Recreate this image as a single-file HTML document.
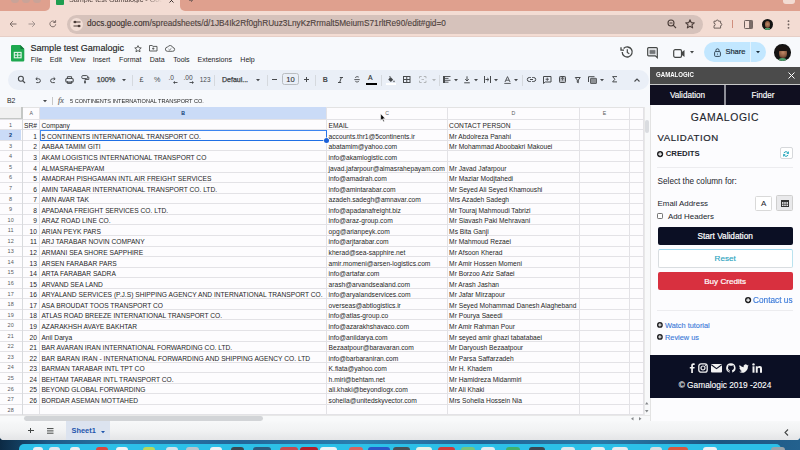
<!DOCTYPE html><html><head><meta charset="utf-8"><style>
*{margin:0;padding:0;box-sizing:border-box}
html,body{width:800px;height:450px;overflow:hidden;background:#1c3d5a;font-family:"Liberation Sans",sans-serif}
.a{position:absolute}
.t{position:absolute;white-space:nowrap;line-height:1}
svg{position:absolute;overflow:visible}
.g{font-size:6.66px;color:#262626}
</style></head><body><div class="a" style="left:0;top:430px;width:800px;height:20px;background:linear-gradient(90deg,#0c2a44 0%,#1d5a86 6%,#2a77a6 15%,#22679a 30%,#2a80b0 45%,#206596 60%,#2a7aa8 75%,#1c5682 90%,#23618e 100%)"></div><div class="a" style="left:19px;top:443.5px;width:762px;height:12px;border-radius:5px;background:#2cc0e8"></div><div class="a" style="left:33px;top:446.8px;width:10px;height:8px;border-radius:3px;background:#e9eef2"></div><div class="a" style="left:49px;top:446.8px;width:11px;height:8px;border-radius:3px;background:#dfe7ee"></div><div class="a" style="left:70px;top:446.8px;width:10px;height:8px;border-radius:3px;background:#eceff1"></div><div class="a" style="left:96px;top:446.8px;width:12px;height:8px;border-radius:3px;background:#d9463c"></div><div class="a" style="left:116px;top:446.8px;width:12px;height:8px;border-radius:3px;background:#f1f3f4"></div><div class="a" style="left:143px;top:446.8px;width:12px;height:8px;border-radius:3px;background:#b9d65a"></div><div class="a" style="left:166px;top:446.8px;width:12px;height:8px;border-radius:3px;background:#d4e2ea"></div><div class="a" style="left:186px;top:446.8px;width:13px;height:8px;border-radius:3px;background:#b8c4cc"></div><div class="a" style="left:210px;top:446.8px;width:12px;height:8px;border-radius:3px;background:#eef2f4"></div><div class="a" style="left:231px;top:446.8px;width:13px;height:8px;border-radius:3px;background:#3b4650"></div><div class="a" style="left:253px;top:446.8px;width:18px;height:8px;border-radius:3px;background:#2d5b7e"></div><div class="a" style="left:280px;top:446.8px;width:18px;height:8px;border-radius:3px;background:#c84b4f"></div><div class="a" style="left:300px;top:446.8px;width:18px;height:8px;border-radius:3px;background:#b51f2a"></div><div class="a" style="left:320px;top:446.8px;width:17px;height:8px;border-radius:3px;background:#eef3f6"></div><div class="a" style="left:349px;top:446.8px;width:14px;height:8px;border-radius:3px;background:#d9645f"></div><div class="a" style="left:368px;top:446.8px;width:22px;height:8px;border-radius:3px;background:#2a56c8"></div><div class="a" style="left:393px;top:446.8px;width:17px;height:8px;border-radius:3px;background:#4a4f55"></div><div class="a" style="left:416px;top:446.8px;width:16px;height:8px;border-radius:3px;background:#e6f1e6"></div><div class="a" style="left:438px;top:446.8px;width:17px;height:8px;border-radius:3px;background:#cf3c3c"></div><div class="a" style="left:461px;top:446.8px;width:14px;height:8px;border-radius:3px;background:#78c47a"></div><div class="a" style="left:481px;top:446.8px;width:14px;height:8px;border-radius:3px;background:#e3ecef"></div><div class="a" style="left:506px;top:446.8px;width:14px;height:8px;border-radius:3px;background:#41b06a"></div><div class="a" style="left:529px;top:446.8px;width:16px;height:8px;border-radius:3px;background:#3c4650"></div><div class="a" style="left:561px;top:446.8px;width:14px;height:8px;border-radius:3px;background:#dfe8ec"></div><div class="a" style="left:591px;top:446.8px;width:14px;height:8px;border-radius:3px;background:#e9eef0"></div><div class="a" style="left:612px;top:446.8px;width:16px;height:8px;border-radius:3px;background:#e6ecef"></div><div class="a" style="left:650px;top:446.8px;width:12px;height:8px;border-radius:3px;background:#d8dde0"></div><div class="a" style="left:668px;top:446.8px;width:20px;height:8px;border-radius:3px;background:#d9573f"></div><div class="a" style="left:703px;top:446.8px;width:14px;height:8px;border-radius:3px;background:#eef2f4"></div><div class="a" style="left:771px;top:446.8px;width:14px;height:8px;border-radius:3px;background:#9aa3aa"></div><div class="a" style="left:0;top:0;width:800px;height:439.6px;background:#f7f9fc;border-radius:0 0 4px 4px;overflow:hidden"><div class="a" style="left:0;top:0;width:800px;height:37px;background:#f3dcd3"></div><div class="a" style="left:0;top:0;width:50px;height:10.6px;background:#dfa08e;border-radius:0 0 5px 0"></div><div class="a" style="left:180px;top:0;width:620px;height:10.6px;background:#dfa08e;border-radius:0 0 0 5px"></div><div class="a" style="left:11.4px;top:-4px;width:7.2px;height:7.2px;border-radius:50%;background:#c9a398"></div><div class="a" style="left:22.4px;top:-4px;width:7.2px;height:7.2px;border-radius:50%;background:#c9a398"></div><div class="a" style="left:33.4px;top:-4px;width:7.2px;height:7.2px;border-radius:50%;background:#c9a398"></div><div class="a" style="left:56px;top:-3px;width:8px;height:7.5px;background:#1e9e50;border-radius:1px"></div><div class="t" style="left:69px;top:-4.4px;font-size:7.2px;color:#4e403c;-webkit-mask-image:linear-gradient(90deg,#000 82%,transparent 100%);width:93px;overflow:hidden">Sample test Gamalogic - Google Sheets</div><svg style="left:168.5px;top:-2.5px" width="5" height="5" viewBox="0 0 5 5"><path d="M.5.5l4 4M4.5.5l-4 4" stroke="#3b3230" stroke-width="1"/></svg><div class="a" style="left:190.5px;top:-2px;width:1px;height:4px;background:#8a6a62"></div><div class="a" style="left:189px;top:-.5px;width:4px;height:1px;background:#8a6a62"></div><div class="a" style="left:783px;top:-4px;width:12px;height:8px;border-radius:3px;background:#f3dcd3"></div><div class="a" style="left:0;top:36px;width:800px;height:1px;background:#e6cfc7"></div><svg style="left:8.5px;top:19.5px" width="8" height="8" viewBox="0 0 8 8"><path d="M7.5 4H1M3.8 1.2L1 4l2.8 2.8" fill="none" stroke="#7d6d69" stroke-width="1"/></svg><svg style="left:28.3px;top:19.5px" width="8" height="8" viewBox="0 0 8 8"><path d="M.5 4H7M4.2 1.2L7 4 4.2 6.8" fill="none" stroke="#a39490" stroke-width="1"/></svg><svg style="left:48.5px;top:19.5px" width="8" height="8" viewBox="0 0 8 8"><path d="M6.7 4.3A2.9 2.9 0 1 1 5.9 1.9" fill="none" stroke="#7d6d69" stroke-width="1"/><path d="M4.3 1.3h2.3V-1" fill="none" stroke="#7d6d69" stroke-width="1" transform="translate(0,1.2)"/></svg><div class="a" style="left:67px;top:14.5px;width:636px;height:19px;border-radius:10px;background:#d6c2bb"></div><div class="a" style="left:70px;top:17.5px;width:13px;height:13px;border-radius:50%;background:#f2ded6"></div><svg style="left:71.5px;top:19px" width="10" height="10" viewBox="0 0 10 10"><path d="M1.5 3h7M1.5 7h7" stroke="#4a3c38" stroke-width="1.1"/><circle cx="3" cy="3" r="1.3" fill="#4a3c38"/><circle cx="7" cy="7" r="1.3" fill="#4a3c38"/></svg><div class="t" style="left:87px;top:19.9px;font-size:8.25px;color:#3a302d;-webkit-text-stroke:.12px #3a302d">docs.google.com<span style="color:#544743">/spreadsheets/d/1JB4Ik2Rf0ghRUuz3LnyKzRrmalt5MeiumS71rltRe90/edit#gid=0</span></div><svg style="left:667px;top:19px" width="10" height="10" viewBox="0 0 10 10"><circle cx="4" cy="4" r="3" fill="none" stroke="#4a3c38" stroke-width="1.1"/><path d="M6.2 6.2L9 9M2.5 4h3" stroke="#4a3c38" stroke-width="1.1"/></svg><svg style="left:685px;top:19px" width="10" height="10" viewBox="0 0 10 10"><path d="M5 .8l1.25 2.8 3 .3-2.3 2 .7 3L5 7.3 2.35 8.9l.7-3-2.3-2 3-.3z" fill="none" stroke="#4a3c38" stroke-width="1.1" stroke-linejoin="round"/></svg><svg style="left:713px;top:19px" width="10" height="10" viewBox="0 0 10 10"><path d="M1 2.2h2.1a1.2 1.2 0 0 1 2.4 0h2.1v2.1a1.2 1.2 0 0 1 0 2.4v2.4H1V6.7a1.2 1.2 0 0 0 0-2.4z" fill="none" stroke="#6e605c" stroke-width="1"/></svg><div class="a" style="left:732.2px;top:19.5px;width:.9px;height:8.5px;background:#d08f7e"></div><svg style="left:743.5px;top:19.5px" width="9" height="9" viewBox="0 0 9 9"><rect x=".5" y=".5" width="8" height="8" rx=".8" fill="none" stroke="#6e605c" stroke-width="1"/><rect x="5" y=".5" width="3.5" height="8" fill="#7a6c68"/></svg><div class="a" style="left:762px;top:18.5px;width:11px;height:11px;border-radius:50%;background:#121212;overflow:hidden"><div class="a" style="left:3.2px;top:2.8px;width:5px;height:6.5px;border-radius:45%;background:radial-gradient(circle at 50% 45%,#c08a68 0,#8a5a40 60%,#3a2418 100%)"></div><div class="a" style="left:3px;top:9px;width:5px;height:3px;background:#4e9a6a"></div></div><svg style="left:786.5px;top:19.5px" width="3" height="9" viewBox="0 0 3 9"><circle cx="1.5" cy="1.2" r=".9" fill="#6e605c"/><circle cx="1.5" cy="4.5" r=".9" fill="#6e605c"/><circle cx="1.5" cy="7.8" r=".9" fill="#6e605c"/></svg><svg style="left:10.5px;top:44.9px" width="13.3" height="16.5" viewBox="0 0 13.3 16.5"><path d="M1.2 0H9.3L13.3 4V15.3A1.2 1.2 0 0 1 12.1 16.5H1.2A1.2 1.2 0 0 1 0 15.3V1.2A1.2 1.2 0 0 1 1.2 0z" fill="#1ea84f"/><path d="M9.3 0L13.3 4H10.3a1 1 0 0 1-1-1z" fill="#137a3a"/><rect x="3.3" y="7.4" width="6.8" height="5.4" fill="none" stroke="#e8f5ec" stroke-width="1.1"/><path d="M3.3 10.1h6.8M6.7 7.4v5.4" stroke="#e8f5ec" stroke-width="1"/></svg><div class="t" style="left:30.5px;top:43.8px;font-size:9.05px;color:#1f1f1f;-webkit-text-stroke:.15px #1f1f1f">Sample test Gamalogic</div><svg style="left:133.5px;top:44.8px" width="8" height="7.5" viewBox="0 0 8 7.5"><path d="M4 .6l.95 2.1 2.3.25-1.7 1.55.5 2.3L4 5.6 1.95 6.8l.5-2.3L.75 2.95l2.3-.25z" fill="none" stroke="#444746" stroke-width=".85" stroke-linejoin="round"/></svg><svg style="left:149.3px;top:45px" width="8.5" height="6.5" viewBox="0 0 8.5 6.5"><path d="M.5.5h2.6l.9.9h4v4.6H.5z" fill="none" stroke="#444746" stroke-width=".85"/><path d="M4.25 2.4v2.4M3.05 3.6h2.4" stroke="#444746" stroke-width=".75"/></svg><svg style="left:164.8px;top:45px" width="10" height="6.8" viewBox="0 0 10 6.8"><path d="M2.4 6.3h5.2a1.9 1.9 0 0 0 .2-3.8A2.8 2.8 0 0 0 2.6 2.1 2.1 2.1 0 0 0 2.4 6.3z" fill="none" stroke="#444746" stroke-width=".85"/><path d="M3.6 4.1l1 .9 1.8-1.7" fill="none" stroke="#444746" stroke-width=".7"/></svg><div class="t" style="left:30.8px;top:56.2px;font-size:7.05px;color:#1f1f1f">File</div><div class="t" style="left:49.8px;top:56.2px;font-size:7.05px;color:#1f1f1f">Edit</div><div class="t" style="left:70.1px;top:56.2px;font-size:7.05px;color:#1f1f1f">View</div><div class="t" style="left:92.7px;top:56.2px;font-size:7.05px;color:#1f1f1f">Insert</div><div class="t" style="left:119.1px;top:56.2px;font-size:7.05px;color:#1f1f1f">Format</div><div class="t" style="left:149.7px;top:56.2px;font-size:7.05px;color:#1f1f1f">Data</div><div class="t" style="left:173.2px;top:56.2px;font-size:7.05px;color:#1f1f1f">Tools</div><div class="t" style="left:197.5px;top:56.2px;font-size:7.05px;color:#1f1f1f">Extensions</div><div class="t" style="left:240.3px;top:56.2px;font-size:7.05px;color:#1f1f1f">Help</div><svg style="left:620px;top:45px" width="14" height="14" viewBox="0 0 14 14"><path d="M2.2 7A5 5 0 1 0 3.6 3.5" fill="none" stroke="#444746" stroke-width="1.3"/><path d="M1 2.2v3h3" fill="none" stroke="#444746" stroke-width="1.3"/><path d="M7.3 4.3V7.4l2 1.3" fill="none" stroke="#444746" stroke-width="1.2"/></svg><svg style="left:646.5px;top:46.8px" width="11" height="11" viewBox="0 0 11 11"><path d="M1.6.7h7.8a.9.9 0 0 1 .9.9v9l-2-1.8H1.6a.9.9 0 0 1-.9-.9V1.6a.9.9 0 0 1 .9-.9z" fill="none" stroke="#444746" stroke-width="1.2"/><rect x="2.6" y="2.7" width="5.8" height="4.6" fill="#8e9194"/><path d="M2.6 4.2h5.8M2.6 5.8h5.8" stroke="#444746" stroke-width=".5"/></svg><svg style="left:672.5px;top:48.5px" width="12" height="9" viewBox="0 0 12 9"><path d="M2.2.7h5a1.3 1.3 0 0 1 1.3 1.3v5a1.3 1.3 0 0 1-1.3 1.3h-5A1.5 1.5 0 0 1 .7 6.8V2.2A1.5 1.5 0 0 1 2.2.7z" fill="none" stroke="#444746" stroke-width="1.2"/><path d="M8.5 3.3l3-2.3v7l-3-2.3z" fill="#444746"/></svg><svg style="left:689.5px;top:50.8px" width="4" height="3" viewBox="0 0 4 3"><path d="M0 0h4L2 2.4z" fill="#444746"/></svg><div class="a" style="left:704px;top:42px;width:62px;height:20px;border-radius:10px;background:#c2e7ff"></div><div class="a" style="left:750px;top:42px;width:1px;height:20px;background:#f9fbfd;opacity:.6"></div><svg style="left:713.5px;top:47.5px" width="7" height="9" viewBox="0 0 7 9"><rect x=".6" y="3.6" width="5.8" height="4.8" rx=".9" fill="none" stroke="#273a4a" stroke-width=".9"/><path d="M1.9 3.6V2.4a1.6 1.6 0 0 1 3.2 0v1.2" fill="none" stroke="#273a4a" stroke-width=".9"/><circle cx="3.5" cy="6" r=".6" fill="#273a4a"/></svg><div class="t" style="left:725.4px;top:48.2px;font-size:7.5px;color:#1d2e3b;-webkit-text-stroke:.2px #1d2e3b">Share</div><svg style="left:756px;top:51px" width="4" height="2.5" viewBox="0 0 4 2.5"><path d="M0 0h4L2 2.3z" fill="#1d2e3b"/></svg><div class="a" style="left:774px;top:44.3px;width:16.5px;height:16.5px;border-radius:50%;background:#141414;overflow:hidden"><div class="a" style="left:4.5px;top:4px;width:8px;height:10px;border-radius:45%;background:radial-gradient(circle at 50% 45%,#c08a68 0,#8a5a40 55%,#3a2418 100%)"></div><div class="a" style="left:2px;top:2px;width:12px;height:5px;border-radius:50% 50% 20% 20%;background:#1a1412"></div><div class="a" style="left:3.5px;top:13.5px;width:9px;height:4px;border-radius:4px 4px 0 0;background:#4e9a6a"></div></div><div class="a" style="left:8px;top:70px;width:641px;height:19.6px;border-radius:10px;background:#eaeff7"></div><svg style="left:17px;top:75px" width="9" height="9" viewBox="0 0 9 9"><circle cx="3.9" cy="3.8" r="2.5" fill="none" stroke="#474a4d" stroke-width="1.1"/><path d="M5.6 5.6L8 8" stroke="#474a4d" stroke-width="1.2"/></svg><svg style="left:35px;top:76.5px" width="6" height="6" viewBox="0 0 6 6"><path d="M1.2 1.8h2.3a1.9 1.9 0 0 1 0 3.8H1.2" fill="none" stroke="#474a4d" stroke-width="1"/><path d="M2.3 .4L.8 1.8l1.5 1.4" fill="none" stroke="#474a4d" stroke-width="1"/></svg><svg style="left:50px;top:76.5px" width="6" height="6" viewBox="0 0 6 6"><path d="M4.8 1.8H2.5a1.9 1.9 0 0 0 0 3.8h2.3" fill="none" stroke="#474a4d" stroke-width="1"/><path d="M3.7 .4l1.5 1.4-1.5 1.4" fill="none" stroke="#474a4d" stroke-width="1"/></svg><svg style="left:64.5px;top:75.5px" width="9" height="8" viewBox="0 0 9 8"><rect x=".8" y="2.5" width="7.4" height="3.6" rx="1.2" fill="none" stroke="#474a4d" stroke-width="1.1"/><path d="M2.4 2.5V.7h4.2v1.8M2.4 5.2v2.2h4.2V5.2" fill="none" stroke="#474a4d" stroke-width="1"/></svg><svg style="left:80.5px;top:75px" width="8.5" height="9" viewBox="0 0 8.5 9"><rect x=".8" y=".6" width="5.8" height="3" rx="1" fill="none" stroke="#474a4d" stroke-width="1"/><path d="M6.6 2.1h1.2v2.4H4v1.4" fill="none" stroke="#474a4d" stroke-width=".9"/><rect x="3.1" y="5.7" width="1.8" height="2.9" rx=".8" fill="#474a4d"/></svg><div class="t" style="left:96.7px;top:76.2px;font-size:7.2px;color:#3c3f42;-webkit-text-stroke:.25px #3c3f42">100%</div><svg style="left:122px;top:79.2px" width="4" height="2.5" viewBox="0 0 4 2.5"><path d="M0 0h4L2 2.3z" fill="#474a4d"/></svg><div class="a" style="left:132px;top:74.5px;width:.8px;height:11px;background:#d5d9de"></div><div class="t" style="left:139.6px;top:76px;font-size:7.2px;color:#474a4d">£</div><div class="t" style="left:154px;top:76px;font-size:7.2px;color:#474a4d">%</div><div class="t" style="left:168.5px;top:74.8px;font-size:6.6px;color:#474a4d">.0</div><svg style="left:172.5px;top:81px" width="5" height="3" viewBox="0 0 5 3"><path d="M4.5 1.5H1.5" stroke="#474a4d" stroke-width=".9"/><path d="M2 0L0 1.5 2 3z" fill="#474a4d"/></svg><div class="t" style="left:183.5px;top:74.8px;font-size:6.6px;color:#474a4d">.00</div><svg style="left:188.5px;top:81px" width="5" height="3" viewBox="0 0 5 3"><path d="M.5 1.5H3.5" stroke="#474a4d" stroke-width=".9"/><path d="M3 0L5 1.5 3 3z" fill="#474a4d"/></svg><div class="t" style="left:199.8px;top:76.5px;font-size:6.4px;color:#474a4d">123</div><div class="a" style="left:214.3px;top:74.5px;width:.8px;height:11px;background:#d5d9de"></div><div class="t" style="left:222px;top:76.3px;font-size:7px;color:#3c3f42;-webkit-text-stroke:.25px #3c3f42">Defaul...</div><svg style="left:255.5px;top:79.2px" width="4" height="2.5" viewBox="0 0 4 2.5"><path d="M0 0h4L2 2.3z" fill="#474a4d"/></svg><div class="a" style="left:266.5px;top:74.5px;width:.8px;height:11px;background:#d5d9de"></div><div class="a" style="left:272px;top:79.4px;width:4.8px;height:1px;background:#474a4d"></div><div class="a" style="left:282px;top:73.3px;width:17px;height:12px;border:.8px solid #b9bdc1;border-radius:2.5px"></div><div class="t" style="left:282px;width:17px;text-align:center;top:76.2px;font-size:7.6px;color:#2c2f32;-webkit-text-stroke:.1px #2c2f32">10</div><div class="a" style="left:304px;top:79.4px;width:4.8px;height:1px;background:#474a4d"></div><div class="a" style="left:305.9px;top:77px;width:1px;height:5px;background:#474a4d"></div><div class="a" style="left:314.5px;top:74.5px;width:.8px;height:11px;background:#d5d9de"></div><div class="t" style="left:322.8px;top:76.3px;font-size:7px;font-weight:bold;color:#474a4d">B</div><svg style="left:337.5px;top:76.5px" width="5" height="6" viewBox="0 0 5 6"><path d="M1.8 .5h3.2M0 5.5h3.2M3.4 .5L1.6 5.5" fill="none" stroke="#474a4d" stroke-width="1"/></svg><svg style="left:353.5px;top:76px" width="6" height="7" viewBox="0 0 6 7"><path d="M.3 3.6h5.4" stroke="#474a4d" stroke-width=".9"/><path d="M4.8 1.2C4.3.5 1.4.3 1.4 1.8M1.3 5.2c.4 1.1 3.5 1.1 3.5-.3" fill="none" stroke="#474a4d" stroke-width=".9"/></svg><div class="t" style="left:368px;top:75.2px;font-size:6.8px;color:#2c2f32;-webkit-text-stroke:.15px #2c2f32">A</div><div class="a" style="left:365.5px;top:82.8px;width:11.5px;height:1.8px;background:#000"></div><div class="a" style="left:381px;top:74.5px;width:.8px;height:11px;background:#d5d9de"></div><svg style="left:386.5px;top:75.5px" width="8" height="7" viewBox="0 0 8 7"><path d="M1.2 3.5L3.6 1.1l2.6 2.6-2.4 2.4z" fill="#474a4d"/><path d="M2 1l1.5-.5" stroke="#474a4d" stroke-width=".8"/><path d="M7 4.2c.4.6.7 1 .7 1.4a.7.7 0 0 1-1.4 0c0-.4.3-.8.7-1.4z" fill="#474a4d"/></svg><div class="a" style="left:386px;top:83px;width:10px;height:1.5px;background:#fff"></div><svg style="left:403.3px;top:76px" width="7.5" height="7" viewBox="0 0 7.5 7"><rect x=".5" y=".5" width="6.5" height="6" fill="none" stroke="#474a4d" stroke-width="1"/><path d="M3.75 .5v6M.5 3.5h6.5" stroke="#474a4d" stroke-width="1"/></svg><svg style="left:419px;top:76px" width="7.5" height="7" viewBox="0 0 7.5 7"><path d="M.5 2.3V.5h2.2M4.8.5H7v1.8M7 4.7v1.8H4.8M2.7 6.5H.5V4.7" fill="none" stroke="#b3b6b9" stroke-width="1"/><path d="M2.5 3.5h2.5" stroke="#b3b6b9" stroke-width=".9"/></svg><svg style="left:432px;top:79.2px" width="4" height="2.5" viewBox="0 0 4 2.5"><path d="M0 0h4L2 2.3z" fill="#b3b6b9"/></svg><div class="a" style="left:438.5px;top:74.5px;width:.8px;height:11px;background:#d5d9de"></div><svg style="left:443px;top:76px" width="8" height="7" viewBox="0 0 8 7"><path d="M.5 .5h7M.5 2.4h5M.5 4.3h7M.5 6.2h5" stroke="#474a4d" stroke-width=".9"/><rect x="0" y="0" width="2" height="7" fill="#474a4d"/></svg><svg style="left:454.2px;top:79.2px" width="4" height="2.5" viewBox="0 0 4 2.5"><path d="M0 0h4L2 2.3z" fill="#474a4d"/></svg><svg style="left:463.5px;top:75.8px" width="6" height="7.5" viewBox="0 0 6 7.5"><path d="M3 .3v4.5M1.2 3.2L3 5l1.8-1.8M.2 6.8h5.6" fill="none" stroke="#474a4d" stroke-width="1"/></svg><svg style="left:473.8px;top:79.2px" width="4" height="2.5" viewBox="0 0 4 2.5"><path d="M0 0h4L2 2.3z" fill="#474a4d"/></svg><svg style="left:483.5px;top:76px" width="7" height="7" viewBox="0 0 7 7"><path d="M.5 0v7M6.5 0v7M1.5 3.5h3M3.3 2l1.6 1.5-1.6 1.5" fill="none" stroke="#474a4d" stroke-width="1"/></svg><svg style="left:493.8px;top:79.2px" width="4" height="2.5" viewBox="0 0 4 2.5"><path d="M0 0h4L2 2.3z" fill="#474a4d"/></svg><svg style="left:503.5px;top:75.5px" width="7" height="8" viewBox="0 0 7 8"><path d="M1 6L3.5.6 6 6M1.9 4.2h3.2M.3 7.4h6.4" fill="none" stroke="#474a4d" stroke-width=".9"/></svg><svg style="left:513.6px;top:79.2px" width="4" height="2.5" viewBox="0 0 4 2.5"><path d="M0 0h4L2 2.3z" fill="#474a4d"/></svg><div class="a" style="left:521.5px;top:74.5px;width:.8px;height:11px;background:#d5d9de"></div><svg style="left:527px;top:77px" width="9" height="5" viewBox="0 0 9 5"><path d="M3.8.5H2.3a2 2 0 0 0 0 4h1.5M5.2.5h1.5a2 2 0 0 1 0 4H5.2M3 2.5h3" fill="none" stroke="#474a4d" stroke-width="1"/></svg><svg style="left:542.8px;top:75.8px" width="8.5" height="8" viewBox="0 0 8.5 8"><path d="M.5.5h7.5v5.5H2.2L.5 7.5z" fill="none" stroke="#474a4d" stroke-width="1"/><path d="M4.25 1.6v3.3M2.6 3.25h3.3" stroke="#474a4d" stroke-width=".9"/></svg><svg style="left:558.5px;top:76px" width="7" height="7" viewBox="0 0 7 7"><rect x=".5" y=".5" width="6" height="6" rx=".8" fill="#b8bcc2" stroke="#474a4d" stroke-width="1"/><path d="M3.5 1.3v3.2M2.2 2.8l1.3-1.4 1.3 1.4" fill="none" stroke="#474a4d" stroke-width=".8"/></svg><svg style="left:575.3px;top:76.5px" width="5.5" height="6" viewBox="0 0 5.5 6"><path d="M.3.5h5L3.3 3v2.8L2.3 5.3V3z" fill="none" stroke="#474a4d" stroke-width="1"/></svg><svg style="left:588px;top:76px" width="9" height="8" viewBox="0 0 9 8"><rect x="2.5" y="2.3" width="6" height="5.2" rx=".5" fill="#8d9094" stroke="#474a4d" stroke-width=".8"/><path d="M.5 6V.7h6" fill="none" stroke="#474a4d" stroke-width="1"/></svg><svg style="left:599.5px;top:79.2px" width="4" height="2.5" viewBox="0 0 4 2.5"><path d="M0 0h4L2 2.3z" fill="#474a4d"/></svg><svg style="left:611.8px;top:76px" width="5.5" height="6.5" viewBox="0 0 5.5 6.5"><path d="M5 .6H.6l2.3 2.65L.6 5.9H5" fill="none" stroke="#474a4d" stroke-width="1"/></svg><svg style="left:634px;top:77.5px" width="6" height="4" viewBox="0 0 6 4"><path d="M.5 3.5L3 1l2.5 2.5" fill="none" stroke="#474a4d" stroke-width="1.1"/></svg><div class="t" style="left:7px;top:97.6px;font-size:6.9px;color:#1f1f1f">B2</div><svg style="left:42.5px;top:99.5px" width="4" height="2.5" viewBox="0 0 4 2.5"><path d="M0 0h4L2 2.3z" fill="#474a4d"/></svg><div class="a" style="left:52.3px;top:96.5px;width:1px;height:8px;background:#c7c7c7"></div><div class="t" style="left:58px;top:96.5px;font-size:8px;font-style:italic;font-family:'Liberation Serif';color:#6a6d70;-webkit-text-stroke:.2px #6a6d70">fx</div><div class="t" style="left:70px;top:98px;font-size:6.15px;transform:scaleX(.91);transform-origin:0 0;color:#1f1f1f">5 CONTINENTS INTERNATIONAL TRANSPORT CO.</div><div class="a" style="left:0;top:107.4px;width:650px;height:307.4px;background:#fdfcfe"></div><div class="a" style="left:0;top:106.9px;width:643px;height:1px;background:#e3e3e3"></div><div class="a" style="left:39.6px;top:107.4px;width:287.2px;height:11.899999999999991px;background:#cadbf7"></div><div class="a" style="left:0;top:129.85999999999999px;width:21.3px;height:10.56px;background:#cadbf7"></div><div class="a" style="left:0;top:107.4px;width:23px;height:11.899999999999991px;background:#f1f1f1;border-right:2px solid #c4c7c5;border-bottom:1.8px solid #c4c7c5"></div><div class="a" style="left:0;top:118.80px;width:643.5px;height:1px;background:#e3e2e6"></div><div class="a" style="left:0;top:129.36px;width:643.5px;height:1px;background:#e3e2e6"></div><div class="a" style="left:0;top:139.92px;width:643.5px;height:1px;background:#e3e2e6"></div><div class="a" style="left:0;top:150.48px;width:643.5px;height:1px;background:#e3e2e6"></div><div class="a" style="left:0;top:161.04px;width:643.5px;height:1px;background:#e3e2e6"></div><div class="a" style="left:0;top:171.60px;width:643.5px;height:1px;background:#e3e2e6"></div><div class="a" style="left:0;top:182.16px;width:643.5px;height:1px;background:#e3e2e6"></div><div class="a" style="left:0;top:192.72px;width:643.5px;height:1px;background:#e3e2e6"></div><div class="a" style="left:0;top:203.28px;width:643.5px;height:1px;background:#e3e2e6"></div><div class="a" style="left:0;top:213.84px;width:643.5px;height:1px;background:#e3e2e6"></div><div class="a" style="left:0;top:224.40px;width:643.5px;height:1px;background:#e3e2e6"></div><div class="a" style="left:0;top:234.96px;width:643.5px;height:1px;background:#e3e2e6"></div><div class="a" style="left:0;top:245.52px;width:643.5px;height:1px;background:#e3e2e6"></div><div class="a" style="left:0;top:256.08px;width:643.5px;height:1px;background:#e3e2e6"></div><div class="a" style="left:0;top:266.64px;width:643.5px;height:1px;background:#e3e2e6"></div><div class="a" style="left:0;top:277.20px;width:643.5px;height:1px;background:#e3e2e6"></div><div class="a" style="left:0;top:287.76px;width:643.5px;height:1px;background:#e3e2e6"></div><div class="a" style="left:0;top:298.32px;width:643.5px;height:1px;background:#e3e2e6"></div><div class="a" style="left:0;top:308.88px;width:643.5px;height:1px;background:#e3e2e6"></div><div class="a" style="left:0;top:319.44px;width:643.5px;height:1px;background:#e3e2e6"></div><div class="a" style="left:0;top:330.00px;width:643.5px;height:1px;background:#e3e2e6"></div><div class="a" style="left:0;top:340.56px;width:643.5px;height:1px;background:#e3e2e6"></div><div class="a" style="left:0;top:351.12px;width:643.5px;height:1px;background:#e3e2e6"></div><div class="a" style="left:0;top:361.68px;width:643.5px;height:1px;background:#e3e2e6"></div><div class="a" style="left:0;top:372.24px;width:643.5px;height:1px;background:#e3e2e6"></div><div class="a" style="left:0;top:382.80px;width:643.5px;height:1px;background:#e3e2e6"></div><div class="a" style="left:0;top:393.36px;width:643.5px;height:1px;background:#e3e2e6"></div><div class="a" style="left:0;top:403.92px;width:643.5px;height:1px;background:#e3e2e6"></div><div class="a" style="left:0;top:414.48px;width:643.5px;height:1px;background:#e3e2e6"></div><div class="a" style="left:21.6px;top:119.3px;width:1px;height:301.5px;background:#d8dadd"></div><div class="a" style="left:39.10px;top:107.4px;width:1px;height:307.4px;background:#e3e2e6"></div><div class="a" style="left:326.30px;top:107.4px;width:1px;height:307.4px;background:#e3e2e6"></div><div class="a" style="left:446.80px;top:107.4px;width:1px;height:307.4px;background:#e3e2e6"></div><div class="a" style="left:578.90px;top:107.4px;width:1px;height:307.4px;background:#e3e2e6"></div><div class="a" style="left:628.90px;top:107.4px;width:1px;height:307.4px;background:#e3e2e6"></div><div class="a" style="left:643.00px;top:107.4px;width:1px;height:307.4px;background:#e3e2e6"></div><div class="t" style="left:21.3px;width:20px;text-align:center;top:110.7px;font-size:5.2px;color:#575a5c;font-weight:normal">A</div><div class="t" style="left:173.20000000000002px;width:20px;text-align:center;top:110.7px;font-size:5.2px;color:#0e3a75;font-weight:bold">B</div><div class="t" style="left:377.05px;width:20px;text-align:center;top:110.7px;font-size:5.2px;color:#575a5c;font-weight:normal">C</div><div class="t" style="left:503.35px;width:20px;text-align:center;top:110.7px;font-size:5.2px;color:#575a5c;font-weight:normal">D</div><div class="t" style="left:594.4px;width:20px;text-align:center;top:110.7px;font-size:5.2px;color:#575a5c;font-weight:normal">E</div><div class="t" style="left:0;width:21.3px;text-align:center;top:122.60px;font-size:5.5px;color:#575a5c;font-weight:normal">1</div><div class="t" style="left:0;width:21.3px;text-align:center;top:133.16px;font-size:5.5px;color:#0e3a75;font-weight:bold">2</div><div class="t" style="left:0;width:21.3px;text-align:center;top:143.72px;font-size:5.5px;color:#575a5c;font-weight:normal">3</div><div class="t" style="left:0;width:21.3px;text-align:center;top:154.28px;font-size:5.5px;color:#575a5c;font-weight:normal">4</div><div class="t" style="left:0;width:21.3px;text-align:center;top:164.84px;font-size:5.5px;color:#575a5c;font-weight:normal">5</div><div class="t" style="left:0;width:21.3px;text-align:center;top:175.40px;font-size:5.5px;color:#575a5c;font-weight:normal">6</div><div class="t" style="left:0;width:21.3px;text-align:center;top:185.96px;font-size:5.5px;color:#575a5c;font-weight:normal">7</div><div class="t" style="left:0;width:21.3px;text-align:center;top:196.52px;font-size:5.5px;color:#575a5c;font-weight:normal">8</div><div class="t" style="left:0;width:21.3px;text-align:center;top:207.08px;font-size:5.5px;color:#575a5c;font-weight:normal">9</div><div class="t" style="left:0;width:21.3px;text-align:center;top:217.64px;font-size:5.5px;color:#575a5c;font-weight:normal">10</div><div class="t" style="left:0;width:21.3px;text-align:center;top:228.20px;font-size:5.5px;color:#575a5c;font-weight:normal">11</div><div class="t" style="left:0;width:21.3px;text-align:center;top:238.76px;font-size:5.5px;color:#575a5c;font-weight:normal">12</div><div class="t" style="left:0;width:21.3px;text-align:center;top:249.32px;font-size:5.5px;color:#575a5c;font-weight:normal">13</div><div class="t" style="left:0;width:21.3px;text-align:center;top:259.88px;font-size:5.5px;color:#575a5c;font-weight:normal">14</div><div class="t" style="left:0;width:21.3px;text-align:center;top:270.44px;font-size:5.5px;color:#575a5c;font-weight:normal">15</div><div class="t" style="left:0;width:21.3px;text-align:center;top:281.00px;font-size:5.5px;color:#575a5c;font-weight:normal">16</div><div class="t" style="left:0;width:21.3px;text-align:center;top:291.56px;font-size:5.5px;color:#575a5c;font-weight:normal">17</div><div class="t" style="left:0;width:21.3px;text-align:center;top:302.12px;font-size:5.5px;color:#575a5c;font-weight:normal">18</div><div class="t" style="left:0;width:21.3px;text-align:center;top:312.68px;font-size:5.5px;color:#575a5c;font-weight:normal">19</div><div class="t" style="left:0;width:21.3px;text-align:center;top:323.24px;font-size:5.5px;color:#575a5c;font-weight:normal">20</div><div class="t" style="left:0;width:21.3px;text-align:center;top:333.80px;font-size:5.5px;color:#575a5c;font-weight:normal">21</div><div class="t" style="left:0;width:21.3px;text-align:center;top:344.36px;font-size:5.5px;color:#575a5c;font-weight:normal">22</div><div class="t" style="left:0;width:21.3px;text-align:center;top:354.92px;font-size:5.5px;color:#575a5c;font-weight:normal">23</div><div class="t" style="left:0;width:21.3px;text-align:center;top:365.48px;font-size:5.5px;color:#575a5c;font-weight:normal">24</div><div class="t" style="left:0;width:21.3px;text-align:center;top:376.04px;font-size:5.5px;color:#575a5c;font-weight:normal">25</div><div class="t" style="left:0;width:21.3px;text-align:center;top:386.60px;font-size:5.5px;color:#575a5c;font-weight:normal">26</div><div class="t" style="left:0;width:21.3px;text-align:center;top:397.16px;font-size:5.5px;color:#575a5c;font-weight:normal">27</div><div class="t" style="left:0;width:21.3px;text-align:center;top:407.72px;font-size:5.5px;color:#575a5c;font-weight:normal">28</div><div class="t g" style="left:23px;width:14.000000000000002px;text-align:right;top:123.30px">SR#</div><div class="t g" style="left:41.4px;top:123.30px">Company</div><div class="t g" style="left:328.6px;top:123.30px">EMAIL</div><div class="t g" style="left:449.1px;top:123.30px">CONTACT PERSON</div><div class="t g" style="left:23px;width:14.000000000000002px;text-align:right;top:133.86px">1</div><div class="t g" style="left:41.4px;top:133.86px">5 CONTINENTS INTERNATIONAL TRANSPORT CO.</div><div class="t g" style="left:328.6px;top:133.86px">accounts.thr1@5continents.ir</div><div class="t g" style="left:449.1px;top:133.86px">Mr Abdolreza Panahi</div><div class="t g" style="left:23px;width:14.000000000000002px;text-align:right;top:144.42px">2</div><div class="t g" style="left:41.4px;top:144.42px">AABAA TAMIM GITI</div><div class="t g" style="left:328.6px;top:144.42px">abatamim@yahoo.com</div><div class="t g" style="left:449.1px;top:144.42px">Mr Mohammad Aboobakri Makouei</div><div class="t g" style="left:23px;width:14.000000000000002px;text-align:right;top:154.98px">3</div><div class="t g" style="left:41.4px;top:154.98px">AKAM LOGISTICS INTERNATIONAL TRANSPORT CO</div><div class="t g" style="left:328.6px;top:154.98px">info@akamlogistic.com</div><div class="t g" style="left:23px;width:14.000000000000002px;text-align:right;top:165.54px">4</div><div class="t g" style="left:41.4px;top:165.54px">ALMASRAHEPAYAM</div><div class="t g" style="left:328.6px;top:165.54px">javad.jafarpour@almasrahepayam.com</div><div class="t g" style="left:449.1px;top:165.54px">Mr Javad Jafarpour</div><div class="t g" style="left:23px;width:14.000000000000002px;text-align:right;top:176.10px">5</div><div class="t g" style="left:41.4px;top:176.10px">AMADRAH PISHGAMAN INTL AIR FREIGHT SERVICES</div><div class="t g" style="left:328.6px;top:176.10px">info@amadrah.com</div><div class="t g" style="left:449.1px;top:176.10px">Mr Maziar Modjtahedi</div><div class="t g" style="left:23px;width:14.000000000000002px;text-align:right;top:186.66px">6</div><div class="t g" style="left:41.4px;top:186.66px">AMIN TARABAR INTERNATIONAL TRANSPORT CO. LTD.</div><div class="t g" style="left:328.6px;top:186.66px">info@amintarabar.com</div><div class="t g" style="left:449.1px;top:186.66px">Mr Seyed Ali Seyed Khamoushi</div><div class="t g" style="left:23px;width:14.000000000000002px;text-align:right;top:197.22px">7</div><div class="t g" style="left:41.4px;top:197.22px">AMN AVAR TAK</div><div class="t g" style="left:328.6px;top:197.22px">azadeh.sadegh@amnavar.com</div><div class="t g" style="left:449.1px;top:197.22px">Mrs Azadeh Sadegh</div><div class="t g" style="left:23px;width:14.000000000000002px;text-align:right;top:207.78px">8</div><div class="t g" style="left:41.4px;top:207.78px">APADANA FREIGHT SERVICES CO. LTD.</div><div class="t g" style="left:328.6px;top:207.78px">info@apadanafreight.biz</div><div class="t g" style="left:449.1px;top:207.78px">Mr Touraj Mahmoudi Tabrizi</div><div class="t g" style="left:23px;width:14.000000000000002px;text-align:right;top:218.34px">9</div><div class="t g" style="left:41.4px;top:218.34px">ARAZ ROAD LINE CO.</div><div class="t g" style="left:328.6px;top:218.34px">info@araz-group.com</div><div class="t g" style="left:449.1px;top:218.34px">Mr Siavash Paki Mehravani</div><div class="t g" style="left:23px;width:14.000000000000002px;text-align:right;top:228.90px">10</div><div class="t g" style="left:41.4px;top:228.90px">ARIAN PEYK PARS</div><div class="t g" style="left:328.6px;top:228.90px">opg@arianpeyk.com</div><div class="t g" style="left:449.1px;top:228.90px">Ms Bita Ganji</div><div class="t g" style="left:23px;width:14.000000000000002px;text-align:right;top:239.46px">11</div><div class="t g" style="left:41.4px;top:239.46px">ARJ TARABAR NOVIN COMPANY</div><div class="t g" style="left:328.6px;top:239.46px">info@arjtarabar.com</div><div class="t g" style="left:449.1px;top:239.46px">Mr Mahmoud Rezaei</div><div class="t g" style="left:23px;width:14.000000000000002px;text-align:right;top:250.02px">12</div><div class="t g" style="left:41.4px;top:250.02px">ARMANI SEA SHORE SAPPHIRE</div><div class="t g" style="left:328.6px;top:250.02px">kherad@sea-sapphire.net</div><div class="t g" style="left:449.1px;top:250.02px">Mr Afsoon Kherad</div><div class="t g" style="left:23px;width:14.000000000000002px;text-align:right;top:260.58px">13</div><div class="t g" style="left:41.4px;top:260.58px">ARSEN FARABAR PARS</div><div class="t g" style="left:328.6px;top:260.58px">amir.momeni@arsen-logistics.com</div><div class="t g" style="left:449.1px;top:260.58px">Mr Amir Hossen Momeni</div><div class="t g" style="left:23px;width:14.000000000000002px;text-align:right;top:271.14px">14</div><div class="t g" style="left:41.4px;top:271.14px">ARTA FARABAR SADRA</div><div class="t g" style="left:328.6px;top:271.14px">info@artafar.com</div><div class="t g" style="left:449.1px;top:271.14px">Mr Borzoo Aziz Safaei</div><div class="t g" style="left:23px;width:14.000000000000002px;text-align:right;top:281.70px">15</div><div class="t g" style="left:41.4px;top:281.70px">ARVAND SEA LAND</div><div class="t g" style="left:328.6px;top:281.70px">arash@arvandsealand.com</div><div class="t g" style="left:449.1px;top:281.70px">Mr Arash Jashan</div><div class="t g" style="left:23px;width:14.000000000000002px;text-align:right;top:292.26px">16</div><div class="t g" style="left:41.4px;top:292.26px">ARYALAND SERVICES (P.J.S) SHIPPING AGENCY AND INTERNATIONAL TRANSPORT CO.</div><div class="t g" style="left:328.6px;top:292.26px">info@aryalandservices.com</div><div class="t g" style="left:449.1px;top:292.26px">Mr Jafar Mirzapour</div><div class="t g" style="left:23px;width:14.000000000000002px;text-align:right;top:302.82px">17</div><div class="t g" style="left:41.4px;top:302.82px">ASA BROUDAT TOOS TRANSPORT CO</div><div class="t g" style="left:328.6px;top:302.82px">overseas@abtlogistics.ir</div><div class="t g" style="left:449.1px;top:302.82px">Mr Seyed Mohammad Danesh Alagheband</div><div class="t g" style="left:23px;width:14.000000000000002px;text-align:right;top:313.38px">18</div><div class="t g" style="left:41.4px;top:313.38px">ATLAS ROAD BREEZE INTERNATIONAL TRANSPORT CO.</div><div class="t g" style="left:328.6px;top:313.38px">info@atlas-group.co</div><div class="t g" style="left:449.1px;top:313.38px">Mr Pourya Saeedi</div><div class="t g" style="left:23px;width:14.000000000000002px;text-align:right;top:323.94px">19</div><div class="t g" style="left:41.4px;top:323.94px">AZARAKHSH AVAYE BAKHTAR</div><div class="t g" style="left:328.6px;top:323.94px">info@azarakhshavaco.com</div><div class="t g" style="left:449.1px;top:323.94px">Mr Amir Rahman Pour</div><div class="t g" style="left:23px;width:14.000000000000002px;text-align:right;top:334.50px">20</div><div class="t g" style="left:41.4px;top:334.50px">Anil Darya</div><div class="t g" style="left:328.6px;top:334.50px">info@anildarya.com</div><div class="t g" style="left:449.1px;top:334.50px">Mr seyed amir ghazi tabatabaei</div><div class="t g" style="left:23px;width:14.000000000000002px;text-align:right;top:345.06px">21</div><div class="t g" style="left:41.4px;top:345.06px">BAR AVARAN IRAN INTERNATIONAL FORWARDING CO. LTD.</div><div class="t g" style="left:328.6px;top:345.06px">Bezaatpour@baravaran.com</div><div class="t g" style="left:449.1px;top:345.06px">Mr Daryoush Bezaatpour</div><div class="t g" style="left:23px;width:14.000000000000002px;text-align:right;top:355.62px">22</div><div class="t g" style="left:41.4px;top:355.62px">BAR BARAN IRAN - INTERNATIONAL FORWARDING AND SHIPPING AGENCY CO. LTD</div><div class="t g" style="left:328.6px;top:355.62px">info@barbaraniran.com</div><div class="t g" style="left:449.1px;top:355.62px">Mr Parsa Saffarzadeh</div><div class="t g" style="left:23px;width:14.000000000000002px;text-align:right;top:366.18px">23</div><div class="t g" style="left:41.4px;top:366.18px">BARMAN TARABAR INTL TPT CO</div><div class="t g" style="left:328.6px;top:366.18px">K.fiata@yahoo.com</div><div class="t g" style="left:449.1px;top:366.18px">Mr H. Khadem</div><div class="t g" style="left:23px;width:14.000000000000002px;text-align:right;top:376.74px">24</div><div class="t g" style="left:41.4px;top:376.74px">BEHTAM TARABAR INTL TRANSPORT CO.</div><div class="t g" style="left:328.6px;top:376.74px">h.miri@behtam.net</div><div class="t g" style="left:449.1px;top:376.74px">Mr Hamidreza Midanmiri</div><div class="t g" style="left:23px;width:14.000000000000002px;text-align:right;top:387.30px">25</div><div class="t g" style="left:41.4px;top:387.30px">BEYOND GLOBAL FORWARDING</div><div class="t g" style="left:328.6px;top:387.30px">ali.khaki@beyondlogx.com</div><div class="t g" style="left:449.1px;top:387.30px">Mr Ali Khaki</div><div class="t g" style="left:23px;width:14.000000000000002px;text-align:right;top:397.86px">26</div><div class="t g" style="left:41.4px;top:397.86px">BORDAR ASEMAN MOTTAHED</div><div class="t g" style="left:328.6px;top:397.86px">soheila@unitedskyvector.com</div><div class="t g" style="left:449.1px;top:397.86px">Mrs Soheila Hossein Nia</div><div class="a" style="left:39.5px;top:129.8px;width:287.5px;height:11.3px;border-style:solid;border-color:#3d85f0 #2a73e6 #1f6fe5 #4a8ef2;border-width:1px 1.4px 1.5px 1px"></div><div class="a" style="left:324.3px;top:138.2px;width:5px;height:5px;border-radius:50%;background:#1a5fd8;box-shadow:0 0 0 .6px #fff"></div><div class="a" style="left:643.5px;top:107.4px;width:6.5px;height:313.4px;background:#f8f9fa;border-left:1px solid #e8e8e8"></div><div class="a" style="left:645px;top:120px;width:3.8px;height:13px;border-radius:2px;background:#dadce0"></div><svg style="left:644.8px;top:401.8px" width="3.5" height="2.5" viewBox="0 0 3.5 2.5"><path d="M0 2.5L1.75 0 3.5 2.5z" fill="#85888b"/></svg><svg style="left:644.8px;top:410px" width="3.5" height="2.5" viewBox="0 0 3.5 2.5"><path d="M0 0L1.75 2.5 3.5 0z" fill="#85888b"/></svg><div class="a" style="left:0;top:414.8px;width:650px;height:6.199999999999989px;background:#f8f9fa;border-top:1px solid #e8e8e8"></div><div class="a" style="left:23.5px;top:416.1px;width:239px;height:4.8px;border-radius:2.4px;background:#d2d4d7"></div><svg style="left:630.8px;top:416.8px" width="2.5" height="3.5" viewBox="0 0 2.5 3.5"><path d="M2.5 0L0 1.75 2.5 3.5z" fill="#85888b"/></svg><svg style="left:638.8px;top:416.8px" width="2.5" height="3.5" viewBox="0 0 2.5 3.5"><path d="M0 0L2.5 1.75 0 3.5z" fill="#85888b"/></svg><svg style="left:380.3px;top:113.3px" width="7" height="10" viewBox="0 0 7 10"><path d="M.7.7v6.8l1.5-1.4 1.2 2.7 1-.45-1.2-2.65h2.1z" fill="#000" stroke="#fff" stroke-width=".6"/></svg><div class="a" style="left:0;top:421px;width:800px;height:19px;background:linear-gradient(#f7f8f9,#f1f2f3 50%,#e4e5e7)"></div><div class="a" style="left:28px;top:430px;width:5.5px;height:1px;background:#444746"></div><div class="a" style="left:30.25px;top:427.75px;width:1px;height:5.5px;background:#444746"></div><svg style="left:47px;top:427.5px" width="7" height="6" viewBox="0 0 7 6"><path d="M0 .6h6.5M0 2.9h6.5M0 5.2h6.5" stroke="#444746" stroke-width="1"/></svg><div class="a" style="left:66px;top:421px;width:44px;height:19px;background:#dce3ef"></div><div class="t" style="left:71.5px;top:427px;font-size:7.4px;color:#1f56ad;font-weight:bold">Sheet1</div><svg style="left:101px;top:430.5px" width="4" height="2.5" viewBox="0 0 4 2.5"><path d="M0 0h4L2 2.3z" fill="#1f56ad"/></svg><svg style="left:783.5px;top:428.5px" width="5" height="7" viewBox="0 0 5 7"><path d="M4 .5L1 3.5 4 6.5" fill="none" stroke="#444746" stroke-width="1.1"/></svg><div class="a" style="left:650px;top:67px;width:150px;height:354px;background:#fcfcfe;border-left:1px solid #e3e3e3"></div><div class="a" style="left:650px;top:67px;width:150px;height:16.6px;background:#4b4b4b"></div><div class="t" style="left:656px;top:72.2px;font-size:6.7px;transform:scaleX(.91);transform-origin:0 0;font-weight:bold;color:#fff">GAMALOGIC</div><svg style="left:788px;top:72.3px" width="7" height="7" viewBox="0 0 7 7"><path d="M.5.5l6 6M6.5.5l-6 6" stroke="#fff" stroke-width="1"/></svg><div class="a" style="left:650px;top:83.6px;width:150px;height:1.8px;background:#c9c9c9"></div><div class="a" style="left:650px;top:85.4px;width:150px;height:19.8px;background:#100f20"></div><div class="a" style="left:724.3px;top:85.4px;width:1.6px;height:19.8px;background:#8e8e98"></div><div class="t" style="left:650px;width:75px;text-align:center;top:92px;font-size:8.15px;color:#fff;-webkit-text-stroke:.15px #fff">Validation</div><div class="t" style="left:726px;width:74px;text-align:center;top:92px;font-size:8.15px;color:#fff;-webkit-text-stroke:.15px #fff">Finder</div><div class="t" style="left:650px;width:150px;text-align:center;top:113.3px;font-size:10.4px;letter-spacing:.6px;-webkit-text-stroke:.12px #22252d;color:#22252d">GAMALOGIC</div><div class="t" style="left:657.5px;top:133.1px;font-size:9.6px;letter-spacing:.55px;-webkit-text-stroke:.2px #22252d;color:#22252d">VALIDATION</div><svg style="left:657.4px;top:150.9px" width="6.2" height="6.2" viewBox="0 0 6.2 6.2"><circle cx="3.1" cy="3.1" r="3.1" fill="#1d1d1f"/><path d="M1.30 3.1h3.60M3.1 1.30v3.60" stroke="#fff" stroke-width="1.12"/></svg><div class="t" style="left:665.7px;top:149.6px;font-size:7.75px;font-weight:bold;color:#22252d">CREDITS</div><div class="a" style="left:779.6px;top:147.4px;width:13px;height:12px;border:1px solid #d6d8db;border-radius:2px;background:#fff"></div><svg style="left:783px;top:150.5px" width="6" height="6" viewBox="0 0 6 6"><path d="M5.2 2.3A2.3 2.3 0 0 0 .9 2.1M.8 3.7a2.3 2.3 0 0 0 4.3.2" fill="none" stroke="#17a2b8" stroke-width="1"/><path d="M5.5 .5v2H3.7M.5 5.5v-2h1.8" fill="none" stroke="#17a2b8" stroke-width=".8"/></svg><div class="a" style="left:657px;top:167px;width:136px;height:1px;background:#ececef"></div><div class="t" style="left:657.6px;top:178.3px;font-size:8.2px;color:#22252d">Select the column for:</div><div class="t" style="left:657.6px;top:199.8px;font-size:7.9px;color:#22252d">Email Address</div><div class="a" style="left:755.3px;top:195.5px;width:16.8px;height:15.5px;border:1px solid #d9d9d9;border-radius:1.5px;background:#fff"></div><div class="t" style="left:755.3px;width:16.8px;text-align:center;top:199.5px;font-size:8px;color:#22252d">A</div><div class="a" style="left:776.2px;top:195.2px;width:16.8px;height:15.8px;border:1px solid #cfcfcf;border-radius:1.5px;background:#e9e9eb"></div><svg style="left:780.5px;top:199.5px" width="8" height="7" viewBox="0 0 8 7"><rect x=".5" y=".5" width="7" height="6" fill="none" stroke="#333" stroke-width="1"/><rect x=".5" y=".5" width="7" height="1.6" fill="#333"/><path d="M2.8 2v4.5M5.2 2v4.5M.5 4.3h7" stroke="#333" stroke-width=".7"/></svg><div class="a" style="left:657.3px;top:213.3px;width:6.2px;height:6.2px;border:1px solid #767676;border-radius:1.2px;background:#fff"></div><div class="t" style="left:667.9px;top:212.8px;font-size:7.9px;color:#22252d">Add Headers</div><div class="a" style="left:657.5px;top:226.8px;width:135.3px;height:18.1px;border-radius:2px;background:#0b0f24"></div><div class="t" style="left:657.5px;width:135.3px;text-align:center;top:233px;font-size:8.27px;color:#fff;-webkit-text-stroke:.2px #fff">Start Validation</div><div class="a" style="left:657.5px;top:249px;width:135.3px;height:18.6px;border-radius:2px;background:#fff;border:1px solid #d9dde0;border-top-color:#9ed7ec;border-right-color:#b9e2ef"></div><div class="t" style="left:657.5px;width:135.3px;text-align:center;top:255px;font-size:8.1px;color:#2aa3c0;-webkit-text-stroke:.15px #2aa3c0">Reset</div><div class="a" style="left:657.5px;top:271.9px;width:135.3px;height:18.3px;border-radius:2px;background:#d8303f"></div><div class="t" style="left:657.5px;width:135.3px;text-align:center;top:277.6px;font-size:8.1px;color:#fff;-webkit-text-stroke:.2px #fff">Buy Credits</div><svg style="left:744.7px;top:297.3px" width="6.2" height="6.2" viewBox="0 0 6.2 6.2"><circle cx="3.1" cy="3.1" r="3.1" fill="#1d1d1f"/><path d="M1.30 3.1h3.60M3.1 1.30v3.60" stroke="#fff" stroke-width="1.12"/></svg><div class="t" style="left:753px;top:295.9px;font-size:9px;transform:scaleX(.92);transform-origin:0 0;color:#3b7ad9;-webkit-text-stroke:.15px #3b7ad9">Contact us</div><div class="a" style="left:657px;top:310px;width:136px;height:1px;background:#ececef"></div><svg style="left:657px;top:321.6px" width="5.8" height="5.8" viewBox="0 0 5.8 5.8"><circle cx="2.9" cy="2.9" r="2.9" fill="#1d1d1f"/><path d="M1.22 2.9h3.36M2.9 1.22v3.36" stroke="#fff" stroke-width="1.04"/></svg><div class="t" style="left:665px;top:321.7px;font-size:7.36px;color:#3b7ad9;-webkit-text-stroke:.12px #3b7ad9">Watch tutorial</div><svg style="left:657px;top:333.6px" width="5.8" height="5.8" viewBox="0 0 5.8 5.8"><circle cx="2.9" cy="2.9" r="2.9" fill="#1d1d1f"/><path d="M1.22 2.9h3.36M2.9 1.22v3.36" stroke="#fff" stroke-width="1.04"/></svg><div class="t" style="left:665px;top:333.6px;font-size:7.36px;color:#3b7ad9;-webkit-text-stroke:.12px #3b7ad9">Review us</div><div class="a" style="left:650px;top:354.8px;width:150px;height:43.5px;background:#0b0f24"></div><svg style="left:689px;top:363px" width="6" height="10" viewBox="0 0 6 10"><path d="M3.9 10V5.6h1.5l.3-1.7H3.9V2.8c0-.5.2-.8.9-.8h.9V.4C5.4.3 4.9.3 4.4.3 3.1.3 2.2 1.1 2.2 2.6v1.3H.8v1.7h1.4V10z" fill="#f2f2f2"/></svg><svg style="left:698px;top:363px" width="10" height="10" viewBox="0 0 10 10"><rect x=".8" y=".8" width="8.4" height="8.4" rx="2.3" fill="none" stroke="#f2f2f2" stroke-width="1.3"/><circle cx="5" cy="5" r="2" fill="none" stroke="#f2f2f2" stroke-width="1.2"/><circle cx="7.4" cy="2.6" r=".6" fill="#f2f2f2"/></svg><svg style="left:711px;top:364px" width="11" height="8.5" viewBox="0 0 11 8.5"><rect x="0" y="0" width="11" height="8.5" rx="1" fill="#f2f2f2"/><path d="M.3.8L5.5 4.6 10.7.8" fill="none" stroke="#0b0f24" stroke-width="1.1"/></svg><svg style="left:726px;top:363px" width="10" height="10" viewBox="0 0 10 10"><path d="M5 .3a4.7 4.7 0 0 0-1.5 9.2c.2 0 .3-.1.3-.2V8.4c-1.3.3-1.6-.6-1.6-.6-.2-.5-.5-.7-.5-.7-.4-.3 0-.3 0-.3.5 0 .7.5.7.5.4.7 1.1.5 1.4.4 0-.3.2-.5.3-.6-1-.1-2.1-.5-2.1-2.3 0-.5.2-.9.5-1.2-.1-.1-.2-.6 0-1.3 0 0 .4-.1 1.3.5a4.5 4.5 0 0 1 2.4 0c.9-.6 1.3-.5 1.3-.5.3.7.1 1.2 0 1.3.3.3.5.7.5 1.2 0 1.8-1.1 2.2-2.1 2.3.2.1.3.4.3.8v1.3c0 .1.1.3.3.2A4.7 4.7 0 0 0 5 .3z" fill="#f2f2f2"/></svg><svg style="left:739px;top:363.5px" width="10" height="9" viewBox="0 0 10 9"><path d="M9.8 1.6c-.4.2-.8.3-1.2.3.4-.3.8-.7.9-1.1-.4.2-.8.4-1.3.5a2 2 0 0 0-3.5 1.9A5.8 5.8 0 0 1 .6 1.1a2 2 0 0 0 .6 2.7c-.3 0-.6-.1-.9-.3 0 1 .7 1.8 1.6 2a2 2 0 0 1-.9 0c.3.8 1 1.4 1.9 1.4A4 4 0 0 1 0 7.8a5.8 5.8 0 0 0 8.9-5.2c.4-.3.7-.6.9-1z" fill="#f2f2f2"/></svg><svg style="left:752px;top:363px" width="10" height="10" viewBox="0 0 10 10"><rect x=".5" y="3.3" width="2" height="6.4" fill="#f2f2f2"/><circle cx="1.5" cy="1.4" r="1.2" fill="#f2f2f2"/><path d="M3.8 3.3h1.9v.9c.3-.5 1-1.1 2-1.1 2 0 2.3 1.3 2.3 3v3.6H8V6.5c0-.8 0-1.7-1.1-1.7s-1.2.8-1.2 1.7v3.2H3.8z" fill="#f2f2f2"/></svg><div class="t" style="left:650px;width:150px;text-align:center;top:380.5px;font-size:8.33px;color:#fff;-webkit-text-stroke:.1px #fff">© Gamalogic 2019 -2024</div></div></body></html>
